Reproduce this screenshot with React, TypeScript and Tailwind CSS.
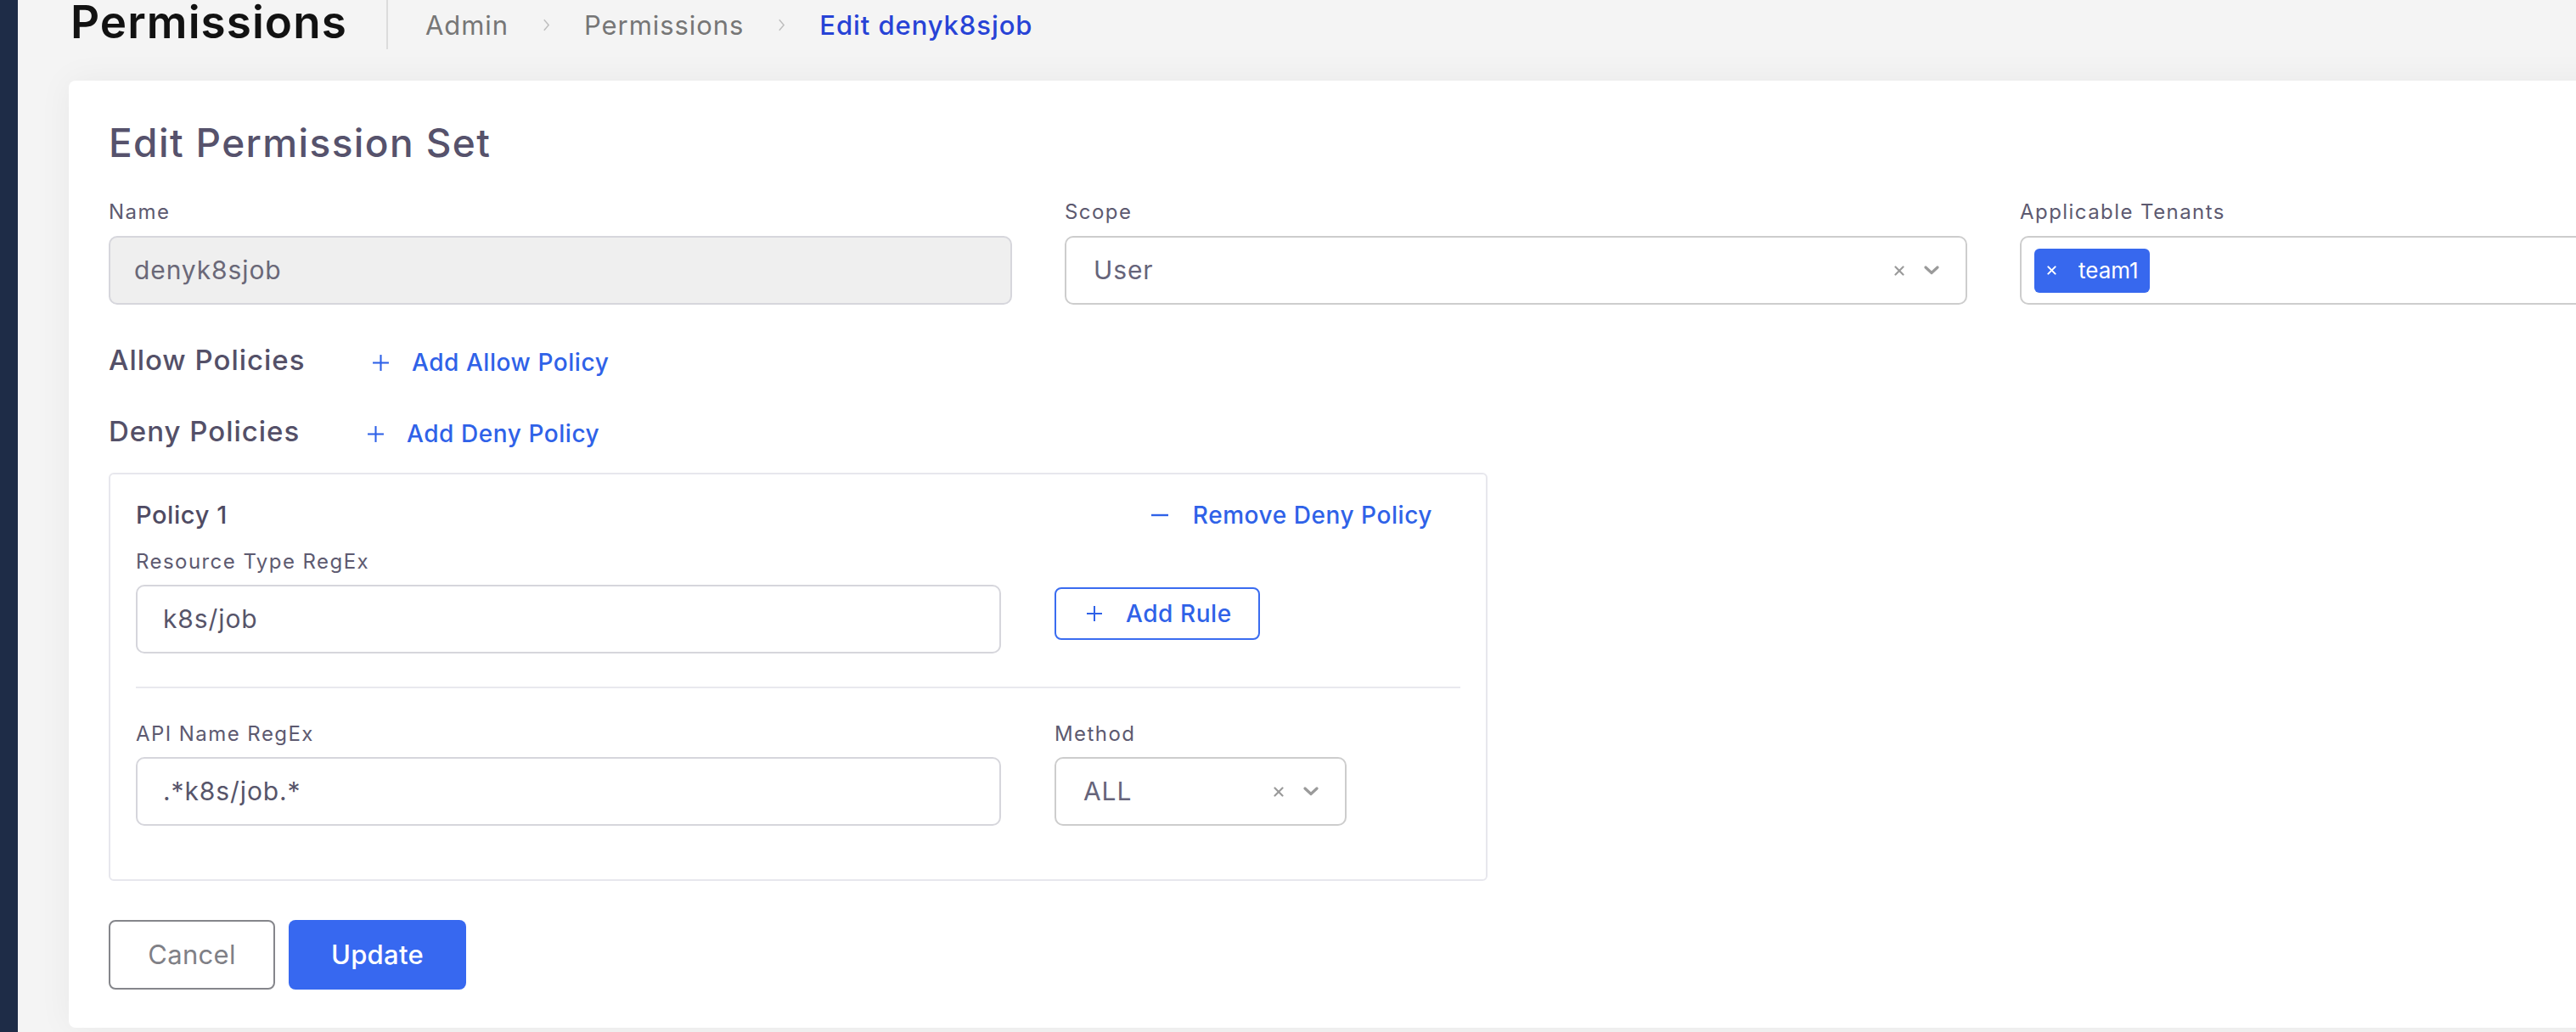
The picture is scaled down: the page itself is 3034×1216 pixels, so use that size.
import React from "react";

const PlusIcon = ({ className = "" }: { className?: string }) => (
  <svg viewBox="0 0 20 20" className={className} fill="none" stroke="currentColor" strokeWidth={2}>
    <line x1="10" y1="1" x2="10" y2="19" />
    <line x1="1" y1="10" x2="19" y2="10" />
  </svg>
);

const MinusIcon = ({ className = "" }: { className?: string }) => (
  <svg viewBox="0 0 20 20" className={className} fill="none" stroke="currentColor" strokeWidth={2.4}>
    <line x1="0" y1="10" x2="20" y2="10" />
  </svg>
);

const ClearIcon = ({ className = "" }: { className?: string }) => (
  <svg viewBox="0 0 12 12" className={className} fill="none" stroke="currentColor" strokeWidth={2.2} strokeLinecap="round">
    <line x1="1.5" y1="1.5" x2="10.5" y2="10.5" />
    <line x1="10.5" y1="1.5" x2="1.5" y2="10.5" />
  </svg>
);

const ChevronDown = ({ className = "" }: { className?: string }) => (
  <svg viewBox="0 0 18 11" className={className} fill="none" stroke="currentColor" strokeWidth={3.2} strokeLinecap="round" strokeLinejoin="round">
    <polyline points="2,2 9,8.5 16,2" />
  </svg>
);

const Crumb = () => (
  <svg viewBox="0 0 10 18" className="w-[9px] h-[17px] mx-[40px] text-[#bdbdbd]" fill="none" stroke="currentColor" strokeWidth={1.6}>
    <polyline points="2,2 8,9 2,16" />
  </svg>
);

// select box with clear + chevron on the right
const SelectBox = ({ value, className = "" }: { value: string; className?: string }) => (
  <div className={`h-[81px] border-2 border-[#cdcdcd] rounded-[10px] bg-white flex items-center pl-[32px] pr-[31px] ${className}`}>
    <span className="flex-1 text-[30px] tracking-[0.03em] text-[#66647a]">{value}</span>
    <ClearIcon className="w-[12px] h-[12px] text-[#9a9a9a]" />
    <ChevronDown className="ml-[23px] w-[18px] h-[11px] text-[#9a9a9a]" />
  </div>
);

const Label = ({ children }: { children: React.ReactNode }) => (
  <div className="text-[24px] leading-none text-[#5d5a70] tracking-[0.06em]">{children}</div>
);

const LinkButton = ({ icon, children, className = "" }: { icon: "plus" | "minus"; children: React.ReactNode; className?: string }) => (
  <button className={`flex items-center text-[28px] leading-none font-medium text-[#2f62e8] tracking-[0.02em] ${className}`}>
    {icon === "plus" ? <PlusIcon className="w-[21px] h-[21px]" /> : <MinusIcon className="w-[20px] h-[20px]" />}
    <span className={icon === "plus" ? "ml-[26px]" : "ml-[29px]"}>{children}</span>
  </button>
);

const App: React.FC = () => {
  return (
    <div className="w-[3034px] h-[1216px] overflow-hidden flex bg-[#f4f4f4] font-['Inter',sans-serif]">
      {/* sidebar edge */}
      <aside className="w-[21px] shrink-0 bg-[#1e2c47]" />

      <main className="flex-1 pl-[60px]">
        {/* Header */}
        <header className="flex items-start h-[58px]">
          <h1 className="ml-[2px] w-[372px] text-[53px] leading-none font-semibold text-[#121212] tracking-[0.02em]">
            Permissions
          </h1>
          <div className="w-[2px] h-[58px] bg-[#dcdcdc]" />
          <nav className="ml-[44px] mt-[14px] flex items-center text-[31px] leading-none tracking-[0.03em]">
            <span className="text-[#767676]">Admin</span>
            <Crumb />
            <span className="text-[#767676]">Permissions</span>
            <Crumb />
            <span className="text-[#2743d6] font-medium">Edit denyk8sjob</span>
          </nav>
        </header>

        {/* Card */}
        <section className="mt-[37px] w-[3410px] bg-white rounded-[8px] shadow-[0_0_40px_rgba(0,0,0,0.05)] pt-[50px] px-[47px] pb-[45px]">
          <h2 className="text-[46px] leading-none font-medium text-[#56526c] tracking-[0.03em]">Edit Permission Set</h2>

          <div className="mt-[47px] grid grid-cols-[1064px_1063px_1064px] gap-x-[62px]">
            <div>
              <Label>Name</Label>
              <div className="mt-[16px] h-[81px] border-2 border-[#d6d6dc] rounded-[10px] bg-[#efefef] flex items-center pl-[28px] text-[30px] tracking-[0.03em] text-[#6a6878]">
                denyk8sjob
              </div>
            </div>
            <div>
              <Label>Scope</Label>
              <SelectBox value="User" className="mt-[16px]" />
            </div>
            <div>
              <Label>Applicable Tenants</Label>
              <div className="mt-[16px] h-[81px] border-2 border-[#cdcdcd] rounded-[10px] bg-white flex items-center pl-[15px]">
                <span className="h-[52px] rounded-[6px] bg-[#3768ee] text-white flex items-center pl-[15px] pr-[13px]">
                  <ClearIcon className="w-[11px] h-[11px]" />
                  <span className="ml-[26px] text-[26px] leading-none">team1</span>
                </span>
              </div>
            </div>
          </div>

          {/* Allow policies */}
          <div className="mt-[48px] flex items-center">
            <h3 className="w-[310px] text-[33px] leading-none font-medium text-[#545068] tracking-[0.03em]">Allow Policies</h3>
            <LinkButton icon="plus" className="mt-[6px]">Add Allow Policy</LinkButton>
          </div>

          {/* Deny policies */}
          <div className="mt-[50px] flex items-center">
            <h3 className="w-[304px] text-[33px] leading-none font-medium text-[#545068] tracking-[0.03em]">Deny Policies</h3>
            <LinkButton icon="plus" className="mt-[6px]">Add Deny Policy</LinkButton>
          </div>

          <div className="mt-[32px] w-[1624px] border-2 border-[#e7e7ed] rounded-[6px] px-[30px] pt-[33px] pb-[63px]">
            <div className="flex items-center justify-between">
              <div className="text-[29px] leading-none font-medium text-[#4f4b63] tracking-[0.02em]">Policy 1</div>
              <LinkButton icon="minus" className="pr-[33px]">Remove Deny Policy</LinkButton>
            </div>

            <div className="mt-[29px] flex items-end gap-[63px]">
              <div className="w-[1019px]">
                <Label>Resource Type RegEx</Label>
                <div className="mt-[15px] h-[81px] border-2 border-[#d6d6dc] rounded-[10px] bg-white flex items-center pl-[30px] text-[30px] tracking-[0.03em] text-[#57556a]">
                  k8s/job
                </div>
              </div>
              <button className="mb-[16px] h-[62px] w-[242px] border-2 border-[#3a6cf0] rounded-[8px] flex items-center pl-[35px] text-[28px] leading-none font-medium text-[#2f62e8] tracking-[0.02em]">
                <PlusIcon className="w-[20px] h-[20px]" />
                <span className="ml-[27px]">Add Rule</span>
              </button>
            </div>

            <div className="mt-[39px] h-[2px] bg-[#e9e9ee]" />

            <div className="mt-[42px] flex gap-[63px]">
              <div className="w-[1019px]">
                <Label>API Name RegEx</Label>
                <div className="mt-[15px] h-[81px] border-2 border-[#d6d6dc] rounded-[10px] bg-white flex items-center pl-[30px] text-[30px] tracking-[0.03em] text-[#57556a]">
                  .*k8s/job.*
                </div>
              </div>
              <div className="w-[344px]">
                <Label>Method</Label>
                <SelectBox value="ALL" className="mt-[15px]" />
              </div>
            </div>
          </div>

          {/* Actions */}
          <div className="mt-[46px] flex gap-[16px]">
            <button className="w-[196px] h-[82px] border-2 border-[#85868b] rounded-[8px] bg-white text-[31px] tracking-[0.01em] text-[#7f8086]">
              Cancel
            </button>
            <button className="w-[209px] h-[82px] rounded-[8px] bg-[#3768f0] text-[31px] tracking-[0.01em] font-medium text-white">
              Update
            </button>
          </div>
        </section>
      </main>
    </div>
  );
};

export default App;
